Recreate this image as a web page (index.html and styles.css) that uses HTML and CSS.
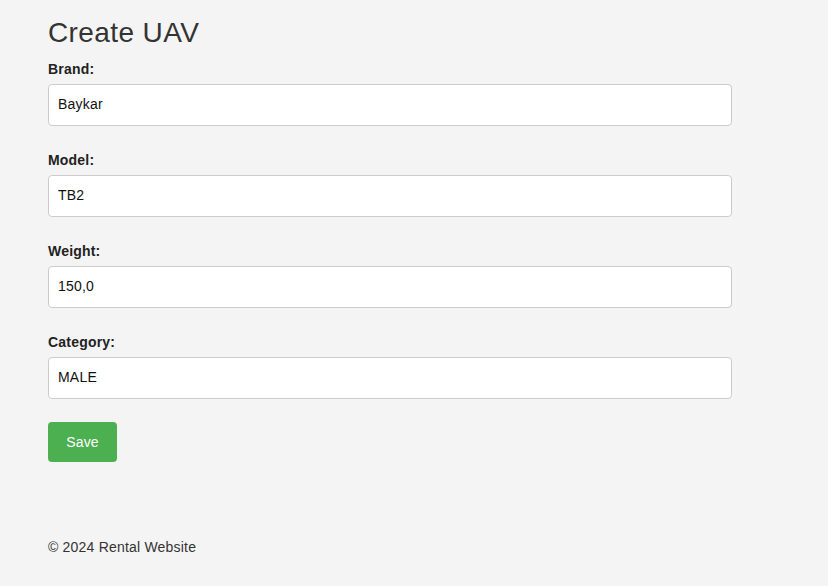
FILE: index.html
```html
<!DOCTYPE html>
<html>
<head>
<meta charset="utf-8">
<title>Create UAV</title>
<link rel="stylesheet" href="styles.css">
</head>
<body>
<main class="page">
  <h1 class="title">Create UAV</h1>
  <form class="form">
    <div class="field">
      <label class="label" for="brand">Brand:</label>
      <input class="input" id="brand" type="text" value="Baykar">
    </div>
    <div class="field">
      <label class="label" for="model">Model:</label>
      <input class="input" id="model" type="text" value="TB2">
    </div>
    <div class="field">
      <label class="label" for="weight">Weight:</label>
      <input class="input" id="weight" type="text" value="150,0">
    </div>
    <div class="field">
      <label class="label" for="category">Category:</label>
      <input class="input" id="category" type="text" value="MALE">
    </div>
    <button class="btn" type="button">Save</button>
  </form>
  <footer class="footer">© 2024 Rental Website</footer>
</main>
</body>
</html>
```
FILE: styles.css
```css
html, body {
  margin: 0;
  padding: 0;
  background: #f4f4f4;
}
body {
  font-family: "Liberation Sans", Arial, sans-serif;
  font-size: 14px;
  color: #333;
  letter-spacing: 0.2px;
}
.page {
  padding: 0 48px;
  width: 684px;
}
.title {
  margin: 0;
  padding-top: 17px;
  font-size: 28px;
  font-weight: normal;
  line-height: 32px;
  letter-spacing: 0.4px;
  color: #333;
}
.form {
  display: flex;
  flex-direction: column;
  margin-top: 12px;
}
.field {
  display: flex;
  flex-direction: column;
  gap: 7px;
  margin-bottom: 26px;
}
.label {
  font-weight: bold;
  line-height: 16px;
  color: #222;
}
.input {
  box-sizing: border-box;
  width: 684px;
  height: 42px;
  margin: 0;
  padding: 0 9px 2px;
  border: 1px solid #ccc;
  border-radius: 4px;
  background: #fff;
  font-family: "Liberation Sans", Arial, sans-serif;
  font-size: 14px;
  letter-spacing: 0.2px;
  color: #111;
}
.btn {
  align-self: flex-start;
  box-sizing: border-box;
  width: 69px;
  height: 40px;
  margin-top: -3px;
  padding: 0;
  border: none;
  border-radius: 4px;
  background: #4caf50;
  color: #fff;
  font-family: "Liberation Sans", Arial, sans-serif;
  font-size: 14px;
  letter-spacing: 0.2px;
}
.footer {
  margin-top: 77px;
  line-height: 16px;
  color: #333;
}
```
